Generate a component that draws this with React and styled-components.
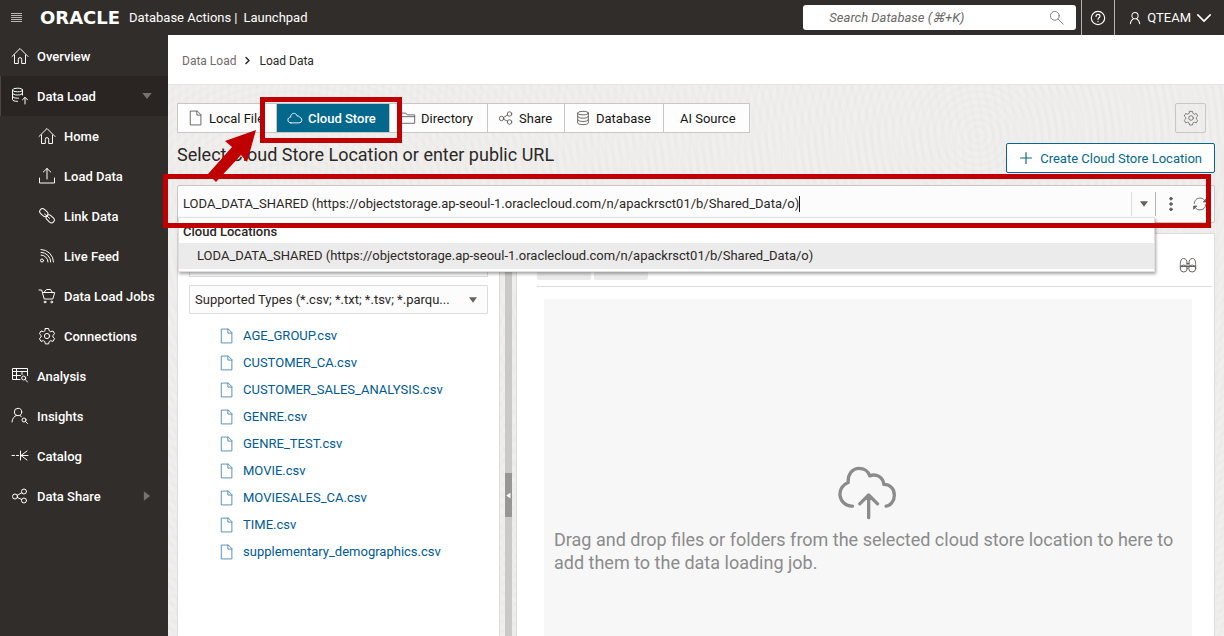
import React from "react";
import styled, { createGlobalStyle, css } from "styled-components";

const GlobalStyle = createGlobalStyle`
  *, *::before, *::after { box-sizing: border-box; }
  body { margin: 0; font-family: Roboto, "Liberation Sans", sans-serif; font-size: 13px; color: #2b2825; background: #312d2a; }
  button, input, select { font: inherit; color: inherit; margin: 0; }
  ul { list-style: none; margin: 0; padding: 0; }
  a { color: inherit; text-decoration: none; }
`;

/* ---------- icons ---------- */

const Svg = styled.svg`
  flex: none;
  display: block;
  fill: none;
  stroke: currentColor;
  stroke-width: ${(p) => p.$w || 1};
  stroke-linecap: round;
  stroke-linejoin: round;
`;

const gear =
  "M7.4 1.5h3.2l.6 2.3 1.5.9 2.3-.7 1.6 2.8-1.7 1.6v1.6l1.7 1.6-1.6 2.8-2.3-.7-1.5.9-.6 2.3H7.4l-.6-2.3-1.5-.9-2.3.7-1.6-2.8 1.7-1.6V8.4L1.4 6.8 3 4l2.3.7 1.5-.9z";

const shapes = {
  home: <path d="M1 9.500 9 1.500l8 8M3.500 8v8.500h3.800v-4.200a1.700 1.700 0 0 1 3.400 0v4.200h3.800V8" />,
  dbUp: (
    <>
      <ellipse cx="6.500" cy="3" rx="5" ry="1.800" />
      <path d="M1.500 3v9.500c0 1 2 1.900 5 1.900M11.500 3v5M1.500 6.200c0 1 2.200 1.800 5 1.800s5-.8 5-1.800M1.500 9.400c0 1 2.200 1.800 5 1.800h1M14 17v-6.500M11.500 12.800l2.500-2.500 2.500 2.500" />
    </>
  ),
  upload: <path d="M1.500 11v5h15v-5M9 12V1.500M5.300 5 9 1.500 12.700 5" />,
  link: (
    <>
      <rect x="1.300" y="2.800" width="9" height="5.600" rx="2.800" transform="rotate(42 5.800 5.600)" />
      <rect x="7.700" y="9" width="9" height="5.600" rx="2.800" transform="rotate(42 12.200 11.800)" />
      <path d="m6.500 7 5.200 4.400" />
    </>
  ),
  feed: (
    <>
      <circle cx="4" cy="13.500" r="1.500" />
      <path d="M3 8a7 7 0 0 1 7 7M3 2.500a12.500 12.500 0 0 1 12.500 12.500M3 5.300a9.700 9.700 0 0 1 9.700 9.700" />
    </>
  ),
  cart: (
    <>
      <path d="M1 3h2.700l2.500 9h8.600l1.900-6.500H4.500M6 5.300 8.500 2.500h4l2 3" />
      <circle cx="7" cy="15" r=".9" />
      <circle cx="13.700" cy="15" r=".9" />
    </>
  ),
  gear: (
    <>
      <path d={gear} />
      <circle cx="9" cy="9" r="2.600" />
    </>
  ),
  analysis: (
    <>
      <path d="M9 12.500H1.500v-11h15v7M1.500 4.500h15M1.500 8.500h8M5.500 1.500v11M11 4.500v3" />
      <circle cx="12.700" cy="11" r="2" />
      <path d="m14.200 12.500 2.300 2.500" />
    </>
  ),
  insights: (
    <>
      <circle cx="7" cy="5" r="3.700" />
      <path d="M1 15c.3-3.800 2.300-5.800 4.500-6.500M8.800 8.500l1.500 1" />
      <circle cx="13" cy="13" r="2" />
      <path d="m14.500 14.500 2 2" />
    </>
  ),
  catalog: <path d="M1 8.500h2.500M5.500 8.500h2M9.500 4v9M9.500 8.500h7.500M10 8.500l6-4.500M10 8.500l6 4.500" />,
  share: (
    <>
      <circle cx="4" cy="9.500" r="2.500" />
      <circle cx="13" cy="4.500" r="2.500" />
      <circle cx="13" cy="13.500" r="2.500" />
      <path d="M6.300 8.300 10.800 5.700M6.300 10.500l4.400 2" />
    </>
  ),
  file: <path d="M3 1.200h7.500l4 4v11.600H3zM10 1.200v4.500h4.500" />,
  cloud: <path d="M4.500 14.500h9a3.200 3.200 0 0 0 .8-6.300C14 7 12.700 6.500 11.600 7 10.900 4.700 9.200 3.500 7.300 3.800 5 4.200 4 6 4.200 8c-1.900.1-3.200 1.500-3.200 3.300s1.500 3.200 3.500 3.200z" />,
  folder: <path d="M1.500 14.500v-11h5l1.500 2h8.500v9zM1.500 7.500h15" />,
  database: (
    <>
      <ellipse cx="9" cy="3.500" rx="6" ry="2" />
      <path d="M3 3.500v11c0 1.100 2.700 2 6 2s6-.9 6-2v-11M3 7.200c0 1.100 2.700 2 6 2s6-.9 6-2M3 10.900c0 1.100 2.700 2 6 2s6-.9 6-2" />
    </>
  ),
  search: (
    <>
      <circle cx="7" cy="7" r="5.300" />
      <path d="m11 11 6 6" />
    </>
  ),
  user: (
    <>
      <circle cx="9" cy="6" r="4" />
      <path d="M3 16.500c.3-4 2.300-5.700 4.300-6.700M15 16.500c-.3-4-2.300-5.700-4.300-6.700" />
    </>
  ),
  help: (
    <>
      <circle cx="9" cy="9" r="7.500" />
      <path d="M6.800 7.200c0-1.300 1-2.200 2.200-2.200s2.200.9 2.200 2.100c0 1.500-2.200 1.700-2.200 3.400M9 12.700v.3" />
    </>
  ),
  refresh: (
    <>
      <path d="M2.500 8.500A6.600 6.600 0 0 1 15 6M15.500 9.500A6.600 6.600 0 0 1 3 12" />
      <path d="M16.200 3.500v3.200h-3.200zM1.800 14.500v-3.200h3.200z" fill="currentColor" />
    </>
  ),
  binoculars: (
    <>
      <circle cx="4.800" cy="12.500" r="3.500" />
      <circle cx="13.200" cy="12.500" r="3.500" />
      <path d="M1.300 12V8.500C1.300 5 2.300 2.500 4.600 2.500S8 4.500 8 7v4M16.700 12V8.500c0-3.500-1-6-3.300-6S10 4.500 10 7v4M8 7.500h2M8 10.500h2M1.500 10.500H8M10 10.500h6.500" />
    </>
  ),
  plus: <path d="M9 2v14M2 9h14" />,
  dots: (
    <g fill="currentColor">
      <circle cx="9" cy="3" r="1.500" />
      <circle cx="9" cy="9" r="1.500" />
      <circle cx="9" cy="15" r="1.500" />
    </g>
  ),
  chevron: <path d="m1 5 8 8 8-8" />,
  menu: <path d="M0 1.500h11M0 3.500h11M0 5.500h11M0 7.500h11M0 9.500h11" strokeLinecap="butt" />,
  down: <path d="M3 5h12L9 13z" fill="currentColor" stroke="none" />,
  right: <path d="M5 3v12L13 9z" fill="currentColor" stroke="none" />,
  left: <path d="M14 2v14L3 9z" fill="currentColor" stroke="none" />,
  crumb: <path d="m6 3 6 6-6 6" />,
  cloudUp: (
    <path d="M5.300 12.500H5a3.700 3.700 0 0 1-1-7.200C3.800 2.800 5.300 1 7.300 1c1.500 0 2.800.9 3.200 2.300 2-.8 4.100.4 4.300 2.600 1.900 0 3.200 1.300 3.200 3.200 0 1.800-1.100 3.200-2.500 3.400M10.200 16V9.200M7.500 11.800l2.700-2.700 2.700 2.700" />
  ),
};

const Icon = ({ name, size = 18, w, box = "0 0 18 18", h }) => (
  <Svg viewBox={box} width={size} height={h || size} $w={w} aria-hidden="true">
    {shapes[name]}
  </Svg>
);

/* ---------- shell ---------- */

const Page = styled.div`
  min-height: 100vh;
  display: flex;
  flex-direction: column;
  overflow: hidden;
`;

const TopBar = styled.header`
  height: 35px;
  display: flex;
  align-items: stretch;
  background: #312d2a;
  color: #fff;
`;

const plainButton = css`
  border: 0;
  background: none;
  padding: 0;
  display: flex;
  align-items: center;
`;

const MenuButton = styled.button`
  ${plainButton}
  padding: 0 11px;
  color: #b9b6b3;
`;

const Brand = styled.div`
  flex: 1;
  display: flex;
  align-items: center;
  white-space: nowrap;
  padding-left: 7px;
`;

const Wordmark = styled.span`
  font: bold 18px/24px "DejaVu Sans", sans-serif;
  margin-right: 9px;
`;

const Product = styled.span`
  font-size: 13px;
`;

const Divider = styled.span`
  margin: 0 6px 0 3px;
`;

const SearchBox = styled.label`
  align-self: center;
  width: 273px;
  height: 25px;
  margin-right: 5px;
  padding: 0 12px 0 26px;
  display: flex;
  align-items: center;
  background: #fff;
  border-radius: 3px;
  color: #6b6866;
  input {
    flex: 1;
    min-width: 0;
    border: 0;
    padding: 0;
    background: none;
    outline: 0;
    font-style: italic;
  }
  input::placeholder { color: #6b6866; opacity: 1; }
`;

const BarButton = styled.button`
  ${plainButton}
  border-left: 1px solid #b5b2b0;
  padding: 0 ${(p) => p.$pad}px;
  gap: 5px;
  span { margin-right: 1px; }
`;

const Body = styled.div`
  flex: 1;
  display: flex;
  align-items: stretch;
`;

const Sidebar = styled.nav`
  flex: none;
  width: 168px;
  padding-top: 1px;
  background: #312d2a;
  color: #fff;
`;

const NavLink = styled.a`
  height: 40px;
  display: flex;
  align-items: center;
  gap: 8px;
  padding: 0 14px 0 ${(p) => (p.$sub ? 37 : 10)}px;
  font-weight: 500;
  white-space: nowrap;
  background: ${(p) => (p.$open ? "#2a2423" : "none")};
  border-left: 1px solid ${(p) => (p.$open ? "#4a4542" : "transparent")};
  > span { flex: 1; }
  > svg:nth-of-type(2) { color: #76726f; }
`;

const Main = styled.main`
  flex: 1;
  min-width: 0;
  display: flex;
  flex-direction: column;
  background-color: #f0efed;
  background-image:
    repeating-radial-gradient(circle at 120px 210px, rgba(90, 80, 70, 0.015) 0 2px, transparent 4px 8px),
    repeating-radial-gradient(circle at 810px 100px, rgba(90, 80, 70, 0.015) 0 2px, transparent 4px 7px);
`;

const Crumbs = styled.nav`
  height: 50px;
  background: #fff;
  border-bottom: 1px solid #e6e4e2;
  display: flex;
  align-items: center;
  gap: 7px;
  padding: 2px 14px 0;
  font-size: 12px;
  a { color: #6f6c69; }
`;

const Content = styled.div`
  flex: 1;
  display: flex;
  flex-direction: column;
  padding: 18px 9px 0 9px;
`;

const TabRow = styled.div`
  display: flex;
  justify-content: space-between;
  padding-right: 9px;
`;

const Tabs = styled.div`
  display: flex;
  height: 30px;
  border: 1px solid #c9c6c3;
  background: #fdfdfd;
`;

const Tab = styled.button`
  ${plainButton}
  position: relative;
  gap: 5px;
  width: ${(p) => p.$width}px;
  padding-left: ${(p) => (p.$bare ? 16 : 10)}px;
  color: ${(p) => (p.$on ? "#fff" : "#161513")};
  font-weight: ${(p) => (p.$on ? 500 : 400)};
  background: ${(p) => (p.$on ? "#04688c" : "none")};
  white-space: nowrap;
  & + & { border-left: 1px solid ${(p) => (p.$on ? "#04688c" : "#c9c6c3")}; }
  > svg { color: ${(p) => (p.$on ? "#fff" : "#5c5956")}; }
`;

const SettingsButton = styled.button`
  ${plainButton}
  width: 31px;
  height: 30px;
  justify-content: center;
  border: 1px solid #c9c6c3;
  border-radius: 2px;
  color: #77736f;
`;

const HeadingRow = styled.div`
  height: 42px;
  display: flex;
  justify-content: space-between;
  align-items: flex-start;
  padding-top: 10px;
`;

const Heading = styled.h1`
  margin: 0;
  font-size: 18px;
  line-height: 24px;
  font-weight: 400;
`;

const CreateButton = styled.button`
  ${plainButton}
  height: 30px;
  padding: 0 12px;
  gap: 7px;
  color: #04688c;
  background: #fff;
  border: 1px solid #04688c;
  border-radius: 2px;
`;

/* ---------- location picker ---------- */

const Picker = styled.div`
  position: relative;
  height: 38px;
  margin-top: 10px;
  display: flex;
  background: #fcfcfc;
  border: 1px solid #c9c6c3;
  border-radius: 2px;
`;

const Combo = styled.div`
  flex: 1;
  min-width: 0;
  display: flex;
  align-items: center;
  padding-left: 5px;
  input {
    field-sizing: content;
    border: 0;
    padding: 0;
    background: none;
    outline: 0;
    line-height: 20px;
  }
`;

const Caret = styled.span`
  width: 1px;
  height: 16px;
  background: #161513;
`;

const ComboArrow = styled.button`
  ${plainButton}
  width: 25px;
  height: 24px;
  margin-left: auto;
  justify-content: center;
  border-left: 1px solid #dedcda;
  border-right: 1px solid #b5b2b0;
  color: #66625f;
`;

const PickerButton = styled.button`
  ${plainButton}
  width: 29px;
  justify-content: center;
  color: #66625f;
`;

const Menu = styled.div`
  position: absolute;
  z-index: 2;
  top: 31px;
  left: 0;
  right: 59px;
  padding: 2px 0;
  background: #fff;
  border: 1px solid #e0dedc;
  box-shadow: 1px 2px 3px rgba(0, 0, 0, 0.35);
`;

const MenuGroup = styled.div`
  padding-left: 4px;
  line-height: 23px;
  font-weight: 500;
`;

const MenuItem = styled.div`
  padding-left: 18px;
  line-height: 26px;
  background: #ebebeb;
`;

/* ---------- hand-drawn callouts over the page ---------- */

const Callout = styled.div`
  position: absolute;
  z-index: 3;
  inset: ${(p) => p.$inset};
  border: 5px solid #c00000;
  pointer-events: none;
`;

const Arrow = styled.svg`
  position: absolute;
  z-index: 3;
  top: 24px;
  left: -71px;
  fill: #c00000;
`;

/* ---------- panels ---------- */

const Panels = styled.div`
  flex: 1;
  display: flex;
  margin-top: 10px;
`;

const FilePanel = styled.section`
  flex: none;
  width: 323px;
  padding: 14px 11px 0;
  background: #fff;
  border: 1px solid #dedcda;
  border-bottom: 0;
`;

const Filter = styled.input`
  display: block;
  width: 100%;
  height: 29px;
  border: 1px solid #dedcda;
  background: #fcfcfc;
`;

const TypeField = styled.label`
  display: grid;
  margin-top: 8px;
  align-items: center;
  > * { grid-area: 1 / 1; }
  > svg { justify-self: end; margin-right: 9px; pointer-events: none; color: #66625f; }
`;

const TypeSelect = styled.select`
  appearance: none;
  width: 100%;
  height: 29px;
  padding: 0 26px 0 5px;
  border: 1px solid #dedcda;
  border-radius: 1px;
  background: #fcfcfc;
`;

const FileList = styled.ul`
  padding: 8px 0 0 30px;
`;

const FileLink = styled.a`
  display: flex;
  align-items: center;
  gap: 8px;
  height: 27px;
  color: #005a94;
  > svg { color: #4786b5; }
`;

const Splitter = styled.div`
  flex: none;
  width: 16px;
  display: flex;
  justify-content: center;
`;

const Track = styled.div`
  width: 7px;
  padding-top: 240px;
  background: #c9c9c9;
`;

const Grip = styled.button`
  ${plainButton}
  width: 7px;
  height: 44px;
  justify-content: center;
  background: #969696;
  color: #fff;
`;

const DropPanel = styled.section`
  flex: 1;
  min-width: 0;
  display: flex;
  flex-direction: column;
  background: #fff;
  border: 1px solid #dedcda;
  border-bottom: 0;
`;

const Toolbar = styled.div`
  height: 53px;
  margin: 0 2px 0 20px;
  display: flex;
  align-items: center;
  gap: 3px;
  border-bottom: 1px solid #dedcda;
`;

const ToolButton = styled.button`
  width: 54px;
  height: 28px;
  padding: 0;
  margin-top: 12px;
  border: 0;
  border-radius: 2px;
  background: #ebebeb;
`;

const FindButton = styled.button`
  ${plainButton}
  margin: 10px 15px 0 auto;
  color: #66625f;
`;

const DropZone = styled.div`
  flex: 1;
  margin: 12px 22px 0 27px;
  padding: 166px 10px 0;
  background: #f7f7f7;
  color: #8b8b8b;
  > svg { margin: 0 auto; }
  p { margin: 7px 0 0; font-size: 18px; line-height: 23px; }
`;

const nav = [
  { name: "Overview", icon: "home" },
  { name: "Data Load", icon: "dbUp", open: true, arrow: "down" },
  { name: "Home", icon: "home", sub: true },
  { name: "Load Data", icon: "upload", sub: true },
  { name: "Link Data", icon: "link", sub: true },
  { name: "Live Feed", icon: "feed", sub: true },
  { name: "Data Load Jobs", icon: "cart", sub: true },
  { name: "Connections", icon: "gear", sub: true },
  { name: "Analysis", icon: "analysis" },
  { name: "Insights", icon: "insights" },
  { name: "Catalog", icon: "catalog" },
  { name: "Data Share", icon: "share", arrow: "right" },
];

const tabs = [
  { name: "Local File", icon: "file", width: 98 },
  { name: "Cloud Store", icon: "cloud", width: 113, on: true },
  { name: "Directory", icon: "folder", width: 98 },
  { name: "Share", icon: "share", width: 77 },
  { name: "Database", icon: "database", width: 99 },
  { name: "AI Source", width: 86 },
];

const files = [
  "AGE_GROUP.csv",
  "CUSTOMER_CA.csv",
  "CUSTOMER_SALES_ANALYSIS.csv",
  "GENRE.csv",
  "GENRE_TEST.csv",
  "MOVIE.csv",
  "MOVIESALES_CA.csv",
  "TIME.csv",
  "supplementary_demographics.csv",
];

const location =
  "LODA_DATA_SHARED (https://objectstorage.ap-seoul-1.oraclecloud.com/n/apackrsct01/b/Shared_Data/o)";

export default function App() {
  return (
    <Page>
      <GlobalStyle />
      <TopBar>
        <MenuButton aria-label="Menu">
          <Icon name="menu" size={11} box="0 0 11 11" />
        </MenuButton>
        <Brand>
          <Wordmark>ORACLE</Wordmark>
          <Product>
            Database Actions<Divider>|</Divider>Launchpad
          </Product>
        </Brand>
        <SearchBox>
          <input type="text" aria-label="Search Database" placeholder="Search Database (⌘+K)" />
          <Icon name="search" size={15} />
        </SearchBox>
        <BarButton $pad={8} aria-label="Help">
          <Icon name="help" size={16} w={1.3} />
        </BarButton>
        <BarButton $pad={13}>
          <Icon name="user" size={14} w={1.3} />
          <span>QTEAM</span>
          <Icon name="chevron" size={14} w={2} />
        </BarButton>
      </TopBar>
      <Body>
        <Sidebar>
          {nav.map((n) => (
            <NavLink key={n.name} href="#" $sub={n.sub} $open={n.open}>
              <Icon name={n.icon} />
              <span>{n.name}</span>
              {n.arrow && <Icon name={n.arrow} size={14} />}
            </NavLink>
          ))}
        </Sidebar>
        <Main>
          <Crumbs>
            <a href="#">Data Load</a>
            <Icon name="crumb" size={9} w={3} />
            <span>Load Data</span>
          </Crumbs>
          <Content>
            <TabRow>
              <Tabs role="tablist">
                {tabs.map((t) => (
                  <Tab key={t.name} role="tab" aria-selected={!!t.on} $on={t.on} $width={t.width} $bare={!t.icon}>
                    {t.icon && <Icon name={t.icon} size={16} />}
                    {t.name}
                    {t.on && <Callout $inset="-7px -13px -11px -17px" />}
                    {t.on && (
                      <Arrow width="52" height="54" viewBox="0 0 52 54" aria-hidden="true">
                        <path d="M50 2 19 13l7 6L2 46l8 8 25-27 6 7z" />
                      </Arrow>
                    )}
                  </Tab>
                ))}
              </Tabs>
              <SettingsButton aria-label="Settings">
                <Icon name="gear" size={16} />
              </SettingsButton>
            </TabRow>
            <HeadingRow>
              <Heading>Select Cloud Store Location or enter public URL</Heading>
              <CreateButton>
                <Icon name="plus" size={14} w={1.5} />
                Create Cloud Store Location
              </CreateButton>
            </HeadingRow>
            <Picker>
              <Combo>
                <input type="text" aria-label="Cloud store location" defaultValue={location} />
                <Caret />
                <ComboArrow aria-label="Show locations">
                  <Icon name="down" size={12} />
                </ComboArrow>
              </Combo>
              <PickerButton aria-label="More actions">
                <Icon name="dots" size={16} />
              </PickerButton>
              <PickerButton aria-label="Refresh">
                <Icon name="refresh" size={16} />
              </PickerButton>
              <Menu role="listbox">
                <MenuGroup>Cloud Locations</MenuGroup>
                <MenuItem role="option" aria-selected="true">
                  {location}
                </MenuItem>
              </Menu>
              <Callout $inset="-12px 3px -6px -15px" />
            </Picker>
            <Panels>
              <FilePanel>
                <Filter type="text" aria-label="Filter files" />
                <TypeField>
                  <TypeSelect aria-label="File types">
                    <option>Supported Types (*.csv; *.txt; *.tsv; *.parqu...</option>
                  </TypeSelect>
                  <Icon name="down" size={12} />
                </TypeField>
                <FileList>
                  {files.map((f) => (
                    <li key={f}>
                      <FileLink href="#">
                        <Icon name="file" size={16} />
                        {f}
                      </FileLink>
                    </li>
                  ))}
                </FileList>
              </FilePanel>
              <Splitter>
                <Track>
                  <Grip aria-label="Collapse panel">
                    <Icon name="left" size={7} />
                  </Grip>
                </Track>
              </Splitter>
              <DropPanel>
                <Toolbar>
                  <ToolButton aria-label="Start" />
                  <ToolButton aria-label="Stop" />
                  <FindButton aria-label="Find">
                    <Icon name="binoculars" />
                  </FindButton>
                </Toolbar>
                <DropZone>
                  <Icon name="cloudUp" size={66} h={56} box="0 0 20 17" />
                  <p>
                    Drag and drop files or folders from the selected cloud store location to here to add them to the
                    data loading job.
                  </p>
                </DropZone>
              </DropPanel>
            </Panels>
          </Content>
        </Main>
      </Body>
    </Page>
  );
}
